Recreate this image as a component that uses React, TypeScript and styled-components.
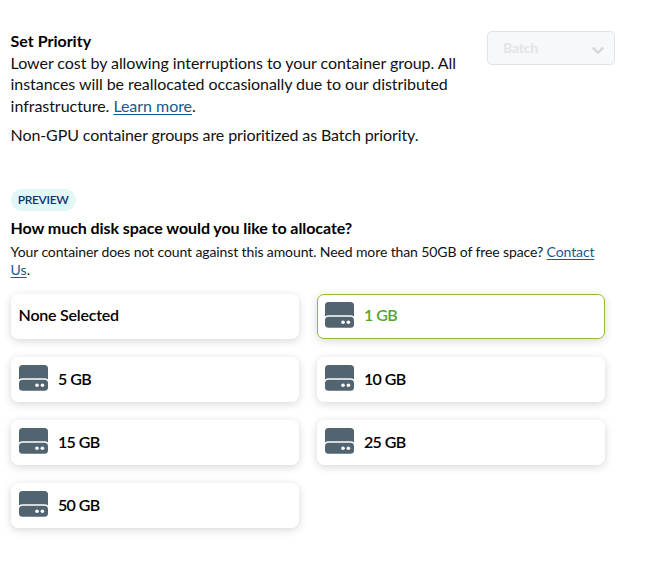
import React from "react";
import styled, { createGlobalStyle } from "styled-components";

const GlobalStyle = createGlobalStyle`
  * { box-sizing: border-box; }
  body {
    margin: 0;
    background: #fff;
    color: #111;
    font-family: Lato, "Noto Sans", sans-serif;
    font-variant-ligatures: none;
  }
`;

const Page = styled.main`
  width: 664px;
  height: 576px;
  padding: 30px 49px 0 10.6px;
  overflow: hidden;
`;

const PrioritySection = styled.section`
  display: flex;
  justify-content: space-between;
  height: 159px;
`;

const Heading = styled.h2<{ $spacing: number }>`
  margin: 0;
  font-size: 16px;
  line-height: 22px;
  font-weight: 700;
  color: #000;
  white-space: nowrap;
  letter-spacing: ${(p) => p.$spacing}px;
`;

const Line = styled.span<{ $spacing: number }>`
  display: block;
  white-space: nowrap;
  letter-spacing: ${(p) => p.$spacing}px;
`;

const Body = styled.p`
  margin: 0 0 7.7px;
  font-size: 16px;
  line-height: 21.4px;
`;

const Note = styled.p`
  margin: 4px 0 15px;
  font-size: 14px;
  line-height: 18px;
`;

const Link = styled.a`
  color: #175a8c;
  text-decoration: underline;
  text-underline-offset: 2px;
  text-decoration-thickness: 1px;
`;

const Select = styled.button`
  display: flex;
  align-items: center;
  justify-content: space-between;
  width: 128px;
  height: 34px;
  margin-top: 1px;
  padding: 0 9px 1px 15px;
  border: 1px solid #dee3e8;
  border-radius: 5px;
  background: #f6f8fa;
  color: #e1e5e9;
  font: 700 14px Lato, sans-serif;
  letter-spacing: -0.2px;
`;

const Chevron = styled.svg`
  width: 14px;
  height: 14px;
  margin-top: 5px;
`;

const Badge = styled.div`
  display: flex;
  align-items: center;
  justify-content: center;
  width: 65px;
  height: 22px;
  padding-bottom: 1px;
  margin-bottom: 6px;
  border-radius: 11px;
  background: #e1f8f7;
  color: #0d3470;
  font-size: 12px;
  font-weight: 600;
  letter-spacing: -0.3px;
`;

const OptionGrid = styled.div`
  display: grid;
  grid-template-columns: 288px 288px;
  grid-auto-rows: 45px;
  gap: 18px;
`;

const Option = styled.button<{ $selected?: boolean }>`
  display: flex;
  align-items: center;
  gap: 10.5px;
  padding: 0 7px;
  border: 1px solid ${(p) => (p.$selected ? "#8fc030" : "#fff")};
  border-radius: 7px;
  background: #fff;
  box-shadow: 0 2px 8px rgba(0, 0, 0, 0.16);
  color: ${(p) => (p.$selected ? "#56a52c" : "#000")};
  font: 600 16px Lato, sans-serif;
  text-align: left;
`;

const Label = styled.span<{ $firstRow: boolean; $plain: boolean }>`
  margin-top: ${(p) => (p.$firstRow ? -4 : -2)}px;
  letter-spacing: ${(p) => (p.$plain ? -0.22 : -0.75)}px;
  word-spacing: ${(p) => (p.$plain ? 0 : 0.4)}px;
`;

const Disk = styled.svg`
  width: 29px;
  height: 26px;
  margin-top: -3px;
`;

const DiskIcon = () => (
  <Disk viewBox="0 0 29 26">
    <path fill="#536471" d="M3.5 0h22A3.5 3.5 0 0 1 29 3.5v11q-1.500-1.200-3.500-1.200h-22Q1.500 13.300 0 14.500v-11A3.500 3.500 0 0 1 3.500 0Z" />
    <rect y="14.700" width="29" height="11.100" rx="3.500" fill="#536471" />
    <circle cx="18" cy="20.300" r="1.800" fill="#fff" />
    <circle cx="23.400" cy="20.300" r="1.800" fill="#fff" />
  </Disk>
);

const sizes = ["None Selected", "1 GB", "5 GB", "10 GB", "15 GB", "25 GB", "50 GB"];

export default function App() {
  return (
    <Page>
      <GlobalStyle />
      <PrioritySection>
        <div>
          <Heading $spacing={0}>Set Priority</Heading>
          <Body>
            <Line $spacing={-0.05}>Lower cost by allowing interruptions to your container group. All</Line>
            <Line $spacing={-0.06}>instances will be reallocated occasionally due to our distributed</Line>
            <Line $spacing={-0.04}>infrastructure. <Link>Learn more</Link>.</Line>
          </Body>
          <Body>
            <Line $spacing={-0.11}>Non-GPU container groups are prioritized as Batch priority.</Line>
          </Body>
        </div>
        <Select disabled>
          Batch
          <Chevron viewBox="0 0 14 14">
            <path d="M1.800 4.500 7 9.700l5.200-5.200" fill="none" stroke="#d3d7dc" strokeWidth="2.300" />
          </Chevron>
        </Select>
      </PrioritySection>
      <section>
        <Badge>PREVIEW</Badge>
        <Heading $spacing={-0.07}>How much disk space would you like to allocate?</Heading>
        <Note>
          <Line $spacing={-0.11}>
            Your container does not count against this amount. Need more than 50GB of free space? <Link>Contact</Link>
          </Line>
          <Line $spacing={0}><Link>Us</Link>.</Line>
        </Note>
        <OptionGrid>
          {sizes.map((size, i) => (
            <Option key={size} $selected={i === 1}>
              {i > 0 && <DiskIcon />}
              <Label $firstRow={i < 2} $plain={i === 0}>{size}</Label>
            </Option>
          ))}
        </OptionGrid>
      </section>
    </Page>
  );
}
